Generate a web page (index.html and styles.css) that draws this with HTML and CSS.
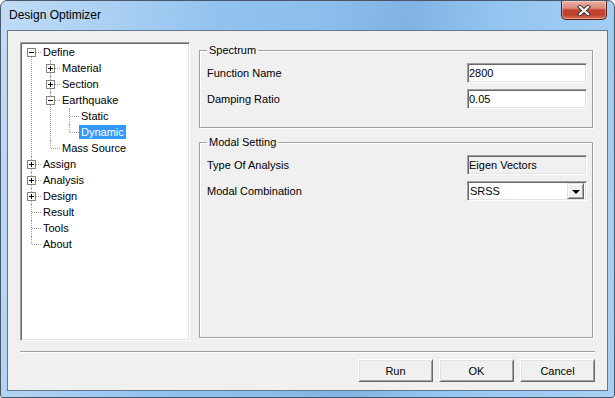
FILE: index.html
```html
<!DOCTYPE html>
<html>
<head>
    <title>Design Optimizer</title>
    <link rel="stylesheet" href="styles.css">
</head>
<body>
    <div class="window">
        <div class="titlebar">
            <span class="title">Design Optimizer</span>
            <button class="close" title="Close">
                <svg width="14" height="11" viewBox="0 0 14 11">
                    <path d="M3 2 L11 9 M11 2 L3 9" stroke="#3b3b3b" stroke-width="4.2" stroke-linecap="square"/>
                    <path d="M3 2 L11 9 M11 2 L3 9" stroke="#ffffff" stroke-width="2.2" stroke-linecap="square"/>
                </svg>
            </button>
        </div>

        <div class="client">
            <div class="main">
                <div class="tree-box">
                    <ul class="tree">
                        <li>
                            <div class="node"><i class="exp minus"></i><span class="label">Define</span></div>
                            <ul>
                                <li><div class="node"><i class="exp plus"></i><span class="label">Material</span></div></li>
                                <li><div class="node"><i class="exp plus"></i><span class="label">Section</span></div></li>
                                <li>
                                    <div class="node"><i class="exp minus"></i><span class="label">Earthquake</span></div>
                                    <ul>
                                        <li><div class="node"><span class="label">Static</span></div></li>
                                        <li><div class="node"><span class="label selected">Dynamic</span></div></li>
                                    </ul>
                                </li>
                                <li><div class="node"><span class="label">Mass Source</span></div></li>
                            </ul>
                        </li>
                        <li><div class="node"><i class="exp plus"></i><span class="label">Assign</span></div></li>
                        <li><div class="node"><i class="exp plus"></i><span class="label">Analysis</span></div></li>
                        <li><div class="node"><i class="exp plus"></i><span class="label">Design</span></div></li>
                        <li><div class="node"><span class="label">Result</span></div></li>
                        <li><div class="node"><span class="label">Tools</span></div></li>
                        <li><div class="node"><span class="label">About</span></div></li>
                    </ul>
                </div>

                <div class="panel">
                    <fieldset class="group spectrum">
                        <legend>Spectrum</legend>
                        <div class="fields">
                            <div class="field-row">
                                <span>Function Name</span>
                                <input class="field" type="text" value="2800">
                            </div>
                            <div class="field-row">
                                <span>Damping Ratio</span>
                                <input class="field" type="text" value="0.05">
                            </div>
                        </div>
                    </fieldset>

                    <fieldset class="group modal">
                        <legend>Modal Setting</legend>
                        <div class="fields">
                            <div class="field-row">
                                <span>Type Of Analysis</span>
                                <input class="field readonly" type="text" value="Eigen Vectors" readonly>
                            </div>
                            <div class="field-row">
                                <span>Modal Combination</span>
                                <div class="field combo">
                                    <span class="combo-text">SRSS</span>
                                    <span class="combo-btn"><i class="arrow"></i></span>
                                </div>
                            </div>
                        </div>
                    </fieldset>
                </div>
            </div>

            <div class="separator"></div>

            <div class="buttons">
                <button class="btn">Run</button>
                <button class="btn">OK</button>
                <button class="btn">Cancel</button>
            </div>
        </div>
    </div>
</body>
</html>
```

FILE: styles.css
```css
body {
    margin: 0;
    font-family: "Liberation Sans", Arial, sans-serif;
    font-size: 11px;
    color: #000;
    background: #fff;
}
/* Window frame (Aero style glass) */
.window {
    width: 615px;
    height: 398px;
    box-sizing: border-box;
    border: 1px solid #48586a;
    border-radius: 7px 7px 3px 3px;
    padding: 0 6px 6px;
    display: flex;
    flex-direction: column;
    background: linear-gradient(100deg, #c1dcf5 0%, #a8cef2 18%, #92c3ef 32%, #8bbeec 48%, #80b3e3 60%, #94c6f1 74%, #a9d0f4 100%);
}
.titlebar {
    height: 29px;
    display: flex;
    justify-content: space-between;
    align-items: flex-start;
}
.title {
    padding: 7px 0 0 2px;
    font-size: 12px;
    line-height: 15px;
}
.close {
    width: 46px;
    height: 19px;
    margin-right: 1px;
    padding: 0;
    border: 1px solid #5a2118;
    border-top: none;
    border-radius: 0 0 5px 5px;
    background: linear-gradient(#eab0a3 0%, #d98a7b 40%, #c5442f 50%, #c0412d 75%, #d9704f 100%);
    box-shadow: inset 0 0 0 1px rgba(255, 255, 255, 0.35);
    display: flex;
    align-items: center;
    justify-content: center;
}
/* Dialog client area */
.client {
    flex: 1;
    background: #f0f0f0;
    border: 1px solid #62778c;
    padding: 11px 12px 8px;
    display: flex;
    flex-direction: column;
}
.main {
    display: flex;
    height: 299px;
}
/* Sunken 3D edge shared by tree and edit fields */
.tree-box,
.field {
    box-sizing: border-box;
    border: 1px solid;
    border-color: #a0a0a0 #fff #fff #a0a0a0;
    box-shadow: inset 1px 1px #696969, inset -1px -1px #e3e3e3;
    background: #fff;
}
.tree-box {
    width: 170px;
    height: 299px;
    padding: 1px;
}
/* Tree view with dotted lines */
.tree,
.tree ul {
    list-style: none;
    margin: 0;
    padding: 0;
}
.tree ul {
    padding-left: 19px;
}
.tree li {
    position: relative;
}
.tree li::before {
    content: "";
    position: absolute;
    left: 9px;
    top: 0;
    bottom: 0;
    border-left: 1px dotted #a0a0a0;
}
.tree > li:first-child::before {
    top: 8px;
}
.tree li:last-child::before {
    bottom: auto;
    height: 8px;
}
.tree li::after {
    content: "";
    position: absolute;
    left: 10px;
    top: 8px;
    width: 9px;
    border-top: 1px dotted #a0a0a0;
}
.node {
    height: 16px;
    padding-left: 19px;
    display: flex;
    align-items: center;
}
.label {
    padding: 0 2px;
    line-height: 14px;
    white-space: nowrap;
}
.label.selected {
    background: #3399ff;
    color: #fff;
}
.exp {
    position: absolute;
    left: 5px;
    top: 4px;
    z-index: 1;
    width: 9px;
    height: 9px;
    box-sizing: border-box;
    border: 1px solid #848484;
    background: #fff;
}
.exp.minus {
    background: linear-gradient(#000, #000) no-repeat center / 5px 1px, #fff;
}
.exp.plus {
    background: linear-gradient(#000, #000) no-repeat center / 5px 1px,
                linear-gradient(#000, #000) no-repeat center / 1px 5px, #fff;
}
/* Right hand panel */
.panel {
    width: 394px;
    margin-left: 9px;
    display: flex;
    flex-direction: column;
}
.group {
    box-sizing: border-box;
    margin: 0;
    padding: 6px 5px 0 7px;
    border: 1px solid #a0a0a0;
    box-shadow: inset 1px 1px #fff, 1px 1px #fff;
}
.group legend {
    padding: 0 2px;
    line-height: 13px;
}
.spectrum {
    margin-top: 2px;
    height: 84px;
}
.modal {
    margin-top: 8px;
    height: 202px;
}
.fields {
    display: flex;
    flex-direction: column;
    gap: 6px;
}
.field-row {
    display: grid;
    grid-template-columns: 1fr 120px;
    align-items: center;
    height: 20px;
}
.field {
    width: 120px;
    height: 20px;
    margin: 0;
    padding: 0 1px;
    font: inherit;
    color: #000;
    outline: none;
}
.field.readonly {
    background: #f0f0f0;
}
.combo {
    display: flex;
    align-items: center;
    justify-content: space-between;
    padding: 2px 2px 2px 2px;
}
.combo-btn {
    box-sizing: border-box;
    width: 17px;
    height: 16px;
    border: 1px solid;
    border-color: #e3e3e3 #696969 #696969 #e3e3e3;
    box-shadow: inset 1px 1px #fff, inset -1px -1px #a0a0a0;
    background: #f0f0f0;
    display: flex;
    align-items: center;
    justify-content: center;
}
.arrow {
    width: 0;
    height: 0;
    border-left: 4px solid transparent;
    border-right: 4px solid transparent;
    border-top: 4px solid #000;
    margin-top: 1px;
}
/* Bottom separator and buttons */
.separator {
    border-top: 1px solid #a0a0a0;
    border-bottom: 1px solid #fff;
    margin: 10px 0 6px;
}
.buttons {
    display: flex;
    justify-content: flex-end;
    gap: 6px;
}
.btn {
    width: 75px;
    height: 23px;
    padding: 0;
    border: 1px solid;
    border-color: #fff #696969 #696969 #fff;
    box-shadow: inset 1px 1px #e3e3e3, inset -1px -1px #a0a0a0;
    background: #f0f0f0;
    font: inherit;
    color: #000;
}
```
